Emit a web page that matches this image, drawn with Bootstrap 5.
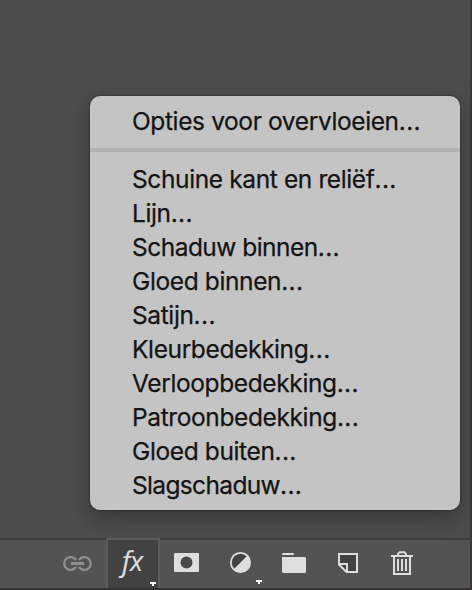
<!DOCTYPE html>
<html lang="nl">
<head>
<meta charset="utf-8">
<title>Laagstijlen</title>
<link href="https://cdn.jsdelivr.net/npm/bootstrap@5.3.0/dist/css/bootstrap.min.css" rel="stylesheet">
<style>
body{width:472px;height:590px;background:#4d4d4d;overflow:hidden;font-family:Inter,"Liberation Sans",sans-serif}
.panel-area{border-right:2px solid #3a3838}
.fx-menu{width:370px;height:414px;margin:96px 0 0 90px;padding:8px 0;background:#c4c4c4;border:0;border-radius:10px;box-shadow:0 0 2px rgba(0,0,0,.65),0 8px 24px rgba(0,0,0,.3)}
.fx-menu .dropdown-item{height:34px;line-height:34px;padding:0 0 0 42px;color:#141414;font-size:24.5px;letter-spacing:-.38px;-webkit-text-stroke:.25px #141414}
.fx-menu .tight{letter-spacing:-.52px}
.fx-menu .tighter{letter-spacing:-.65px}
.fx-menu .dots{letter-spacing:.35px}
.fx-menu .dropdown-divider{height:4px;margin:10px 0;border:0;background:#b1b1b1;opacity:1}
.toolbar{height:52px;padding-left:50px;background:#535353;border-top:2px solid #3e3e3e;border-bottom:2px solid #353333}
.tool{width:54px;height:48px;padding:0;border:0;border-radius:0;line-height:0;color:#dedede}
.tool-link{width:56px;color:#8f8f8f}
.tool-fx{height:50px;margin-top:-2px;background:#424242;border:2px solid #5b5b5b;border-bottom:0}
.tool svg{display:block}
.fx-label{font:italic 27px "Open Sans","Noto Sans",sans-serif;letter-spacing:-.3px}
</style>
</head>
<body>
<main class="d-flex flex-column vh-100">
<div class="panel-area flex-grow-1">
<div class="dropdown-menu fx-menu d-block position-static">
<a class="dropdown-item">Opties voor overvloeien<span class="dots">...</span></a>
<hr class="dropdown-divider">
<a class="dropdown-item">Schuine kant en reliëf<span class="dots">...</span></a>
<a class="dropdown-item">Lijn<span class="dots">...</span></a>
<a class="dropdown-item tight">Schaduw binnen<span class="dots">...</span></a>
<a class="dropdown-item">Gloed binnen<span class="dots">...</span></a>
<a class="dropdown-item">Satijn<span class="dots">...</span></a>
<a class="dropdown-item">Kleurbedekking<span class="dots">...</span></a>
<a class="dropdown-item">Verloopbedekking<span class="dots">...</span></a>
<a class="dropdown-item">Patroonbedekking<span class="dots">...</span></a>
<a class="dropdown-item">Gloed buiten<span class="dots">...</span></a>
<a class="dropdown-item tighter">Slagschaduw<span class="dots">...</span></a>
</div>
</div>
<div class="toolbar d-flex panel-area">
<button class="btn tool tool-link flex-shrink-0" aria-label="Koppelen"><svg width="56" height="48" viewBox="50 540 56 48"><g fill="none" stroke="currentColor" stroke-width="2.300"><path d="M76 560a6.400 6.400 0 1 0 0 7M79 560a6.400 6.400 0 1 1 0 7"/><path d="M71 563.500h13" stroke-width="3"/></g></svg></button>
<button class="btn tool tool-fx flex-shrink-0" aria-label="Laagstijl"><svg width="50" height="48" viewBox="108 540 50 48"><text class="fx-label" x="122" y="571" fill="currentColor" stroke="currentColor" stroke-width=".2">fx</text><path d="M150 582h6v2h-2v2h-2v-2h-2z" fill="#fff"/></svg></button>
<button class="btn tool flex-shrink-0" aria-label="Masker"><svg width="54" height="48" viewBox="160 540 54 48"><rect x="174" y="553" width="25" height="19" rx="1" fill="currentColor"/><circle cx="186.500" cy="562.500" r="6" fill="#494949"/></svg></button>
<button class="btn tool flex-shrink-0" aria-label="Aanpassingslaag"><svg width="54" height="48" viewBox="214 540 54 48"><circle cx="240.500" cy="562.500" r="9.600" fill="#424242" stroke="currentColor" stroke-width="1.800"/><path d="M247.500 555.500a9.900 9.900 0 0 1-14 14z" fill="currentColor"/><path d="M256 580h6v2h-2v2h-2v-2h-2z" fill="#fff"/></svg></button>
<button class="btn tool flex-shrink-0" aria-label="Nieuwe groep"><svg width="54" height="48" viewBox="268 540 54 48"><path d="M282 555v-1l1-1h10l1 1v1zM282 557h23l1 1v14l-1 1h-22l-1-1z" fill="currentColor"/></svg></button>
<button class="btn tool flex-shrink-0" aria-label="Nieuwe laag"><svg width="54" height="48" viewBox="322 540 54 48"><path d="M339 554h18v18h-10.500l-7.500-7.500z" fill="#424242" stroke="currentColor" stroke-width="2"/><path d="M339 564h8v8" fill="none" stroke="currentColor" stroke-width="2"/></svg></button>
<button class="btn tool flex-shrink-0" aria-label="Verwijderen"><svg width="54" height="48" viewBox="376 540 54 48"><g fill="none" stroke="currentColor" stroke-width="2"><path d="M391 556h22M398 555v-1l1.500-1.800h5L406 554v1M394 557v17h16v-17M398 559v12M402 559v12M406 559v12"/></g></svg></button>
</div>
</main>
<script src="https://cdn.jsdelivr.net/npm/bootstrap@5.3.0/dist/js/bootstrap.bundle.min.js"></script>
</body>
</html>
